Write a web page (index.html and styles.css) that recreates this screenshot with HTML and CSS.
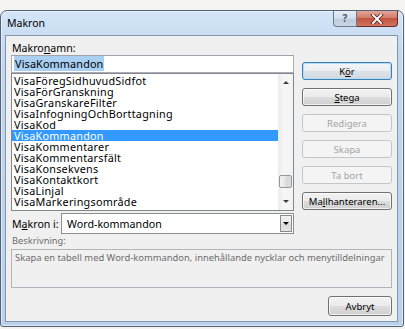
FILE: index.html
```html
<!DOCTYPE html>
<html lang="sv">
<head>
    <meta charset="UTF-8">
    <title>Makron</title>
    <link rel="stylesheet" href="styles.css">
</head>
<body>
    <div class="window">
        <!-- Title bar -->
        <div class="titlebar">
            <span class="title">Makron</span>
            <div class="caption">
                <span class="cap-help">?</span>
                <span class="cap-close">
                    <svg width="14" height="10" viewBox="0 0 14 10">
                        <path d="M3 1 L11 9 M11 1 L3 9" stroke="#5a1f18" stroke-width="3.6" stroke-linecap="square"/>
                        <path d="M3 1 L11 9 M11 1 L3 9" stroke="#ffffff" stroke-width="2" stroke-linecap="square"/>
                    </svg>
                </span>
            </div>
        </div>

        <!-- Client area -->
        <div class="client">
            <div class="top">
                <div class="left">
                    <div class="lbl">Makro<u>n</u>amn:</div>
                    <div class="namefield"><span class="sel">VisaKommandon</span></div>
                    <div class="listbox">
                        <ul class="items">
                            <li>VisaFöregSidhuvudSidfot</li>
                            <li>VisaFörGranskning</li>
                            <li>VisaGranskareFilter</li>
                            <li>VisaInfogningOchBorttagning</li>
                            <li>VisaKod</li>
                            <li class="active">VisaKommandon</li>
                            <li>VisaKommentarer</li>
                            <li>VisaKommentarsfält</li>
                            <li>VisaKonsekvens</li>
                            <li>VisaKontaktkort</li>
                            <li>VisaLinjal</li>
                            <li>VisaMarkeringsområde</li>
                        </ul>
                        <div class="scrollbar">
                            <span class="arrow up"></span>
                            <span class="track"><span class="thumb"></span></span>
                            <span class="arrow down"></span>
                        </div>
                    </div>
                    <div class="macro-in">
                        <span class="lbl">M<u>a</u>kron i:</span>
                        <div class="combo">
                            <span class="combo-text">Word-kommandon</span>
                            <span class="drop"><span class="tri"></span></span>
                        </div>
                    </div>
                </div>
                <div class="buttons">
                    <button class="btn default">K<u>ö</u>r</button>
                    <button class="btn"><u>S</u>tega</button>
                    <button class="btn" disabled>Redigera</button>
                    <button class="btn" disabled>Skapa</button>
                    <button class="btn" disabled>Ta bort</button>
                    <button class="btn">Ma<u>l</u>lhanteraren...</button>
                </div>
            </div>
            <div class="lbl muted">Beskrivning:</div>
            <div class="desc">Skapa en tabell med Word-kommandon, innehållande nycklar och menytilldelningar</div>
            <div class="footer">
                <button class="btn cancel">Avbryt</button>
            </div>
        </div>
    </div>
</body>
</html>
```

FILE: styles.css
```css
body {
    margin: 0;
    background-color: #f5f3f0;
    font-family: "Noto Sans", "Open Sans", sans-serif;
    font-size: 9.5px;
    color: #000;
}
u {
    text-decoration-thickness: 1px;
    text-underline-offset: 1px;
}

/* window frame */
.window {
    box-sizing: border-box;
    width: 404px;
    height: 317px;
    margin-top: 10px;
    border: 1px solid #52627a;
    border-radius: 7px 7px 3px 3px;
    padding: 0 5px 4px 4px;
    display: flex;
    flex-direction: column;
    background: linear-gradient(to bottom, #d4e5f7 0, #c3d8ef 40px, #b9d1eb 100%);
    box-shadow: inset 0 0 0 1px rgba(255, 255, 255, 0.5);
}
.titlebar {
    height: 24px;
    display: flex;
    justify-content: space-between;
    align-items: flex-start;
    padding-left: 2px;
}
.title {
    font-size: 10.5px;
    line-height: 25px;
    color: #000;
}
.caption {
    display: flex;
    height: 16px;
}
.cap-help {
    box-sizing: border-box;
    width: 24px;
    height: 16px;
    border: 1px solid #6b7b8f;
    border-top: none;
    border-radius: 0 0 0 4px;
    background: linear-gradient(to bottom, #e6edf5 0%, #d2dce8 50%, #bccadb 51%, #c9d6e4 100%);
    color: #46556a;
    font-size: 10px;
    font-weight: bold;
    text-align: center;
    line-height: 14px;
}
.cap-close {
    box-sizing: border-box;
    width: 41px;
    height: 16px;
    border: 1px solid #6c2c24;
    border-left: none;
    border-top: none;
    border-radius: 0 0 4px 0;
    background: linear-gradient(to bottom, #e2a597 0%, #d27d6b 45%, #c3553f 50%, #cf7460 100%);
    display: flex;
    align-items: center;
    justify-content: center;
}

/* client area */
.client {
    flex: 1;
    background-color: #f0f0f0;
    border: 1px solid #8296ad;
    padding: 6px 5px 0 5px;
}
.top {
    display: flex;
    gap: 8px;
}
.left {
    width: 283px;
}
.lbl {
    font-size: 10.6px;
    line-height: 12px;
    height: 12px;
    padding-left: 1px;
}
.lbl.muted {
    font-size: 9.3px;
    color: #6d6d6d;
    margin-top: 1px;
}
.namefield {
    box-sizing: border-box;
    height: 18px;
    margin-top: 1px;
    background: #fff;
    border: 1px solid #abadb3;
    border-top-color: #a0a3aa;
    padding: 1px 0 0 2px;
    font-size: 10.8px;
    letter-spacing: 0.15px;
    line-height: 14px;
}
.sel {
    background-color: #a9cff3;
    padding: 0 1px;
}

/* list */
.listbox {
    box-sizing: border-box;
    height: 138px;
    background: #fff;
    border: 1px solid #828790;
    display: flex;
}
.items {
    flex: 1;
    list-style: none;
    margin: 0;
    padding: 1px 0 0 0;
    font-size: 10.8px;
    letter-spacing: 0.25px;
}
.items li {
    height: 11px;
    line-height: 11px;
    padding-left: 2px;
    white-space: nowrap;
}
.items li.active {
    background-color: #3399ff;
    color: #fff;
}
.scrollbar {
    width: 15px;
    display: flex;
    flex-direction: column;
    background: linear-gradient(to right, #ebebeb, #f7f7f7 40%, #f2f2f2);
}
.arrow {
    height: 17px;
    display: flex;
    align-items: center;
    justify-content: center;
}
.arrow::after {
    content: "";
    border-left: 3px solid transparent;
    border-right: 3px solid transparent;
}
.arrow.up::after {
    border-bottom: 3px solid #3c3c3c;
}
.arrow.down::after {
    border-top: 3px solid #3c3c3c;
}
.track {
    flex: 1;
    display: flex;
    flex-direction: column;
    justify-content: flex-end;
    padding-bottom: 5px;
}
.thumb {
    box-sizing: border-box;
    height: 13px;
    margin: 0 1px;
    border: 1px solid #979797;
    border-radius: 2px;
    background: linear-gradient(to right, #f4f4f4, #e2e2e2 50%, #d6d6d6 51%, #dedede);
}

/* macro source row */
.macro-in {
    display: flex;
    align-items: center;
    margin-top: 2px;
    height: 21px;
}
.macro-in .lbl {
    width: 49px;
}
.combo {
    flex: 1;
    box-sizing: border-box;
    height: 21px;
    background: #fff;
    border: 1px solid #8e8f8f;
    display: flex;
    align-items: center;
    padding: 1px 1px 1px 5px;
    font-size: 10.7px;
}
.combo-text {
    flex: 1;
}
.drop {
    box-sizing: border-box;
    width: 12px;
    height: 17px;
    border: 1px solid #8b8b8b;
    background: linear-gradient(to bottom, #f3f3f3, #e6e6e6 50%, #d9d9d9 51%, #e4e4e4);
    display: flex;
    align-items: center;
    justify-content: center;
}
.tri {
    border-left: 3px solid transparent;
    border-right: 3px solid transparent;
    border-top: 3px solid #000;
}

/* buttons */
.buttons {
    width: 90px;
    margin-top: 20px;
    display: flex;
    flex-direction: column;
    gap: 8px;
}
.btn {
    box-sizing: border-box;
    height: 18px;
    margin: 0;
    padding: 0;
    font-family: inherit;
    font-size: 9.5px;
    color: #000;
    border: 1px solid #707070;
    border-radius: 3px;
    background: linear-gradient(to bottom, #f2f2f2 0%, #ebebeb 50%, #dddddd 51%, #cfcfcf 100%);
    box-shadow: inset 0 0 0 1px rgba(255, 255, 255, 0.7);
}
.btn.default {
    border-color: #3c7fb1;
    box-shadow: inset 0 0 0 1px #b6dcf5;
    background: linear-gradient(to bottom, #f3f6f8 0%, #eaeef2 50%, #dde2e7 51%, #d3d9e0 100%);
}
.btn:disabled {
    border-color: #c4c7ca;
    background: #f4f4f4;
    color: #a4a4a4;
    box-shadow: none;
}

/* description */
.desc {
    box-sizing: border-box;
    height: 39px;
    margin-top: 2px;
    border: 1px solid #b2b4ba;
    background: #f0f0f0;
    color: #6d6d6d;
    padding: 2px 0 0 3px;
    font-size: 9.4px;
    line-height: 12px;
    white-space: nowrap;
}
.footer {
    display: flex;
    justify-content: flex-end;
    margin-top: 8px;
}
.btn.cancel {
    width: 64px;
    height: 20px;
}
```
